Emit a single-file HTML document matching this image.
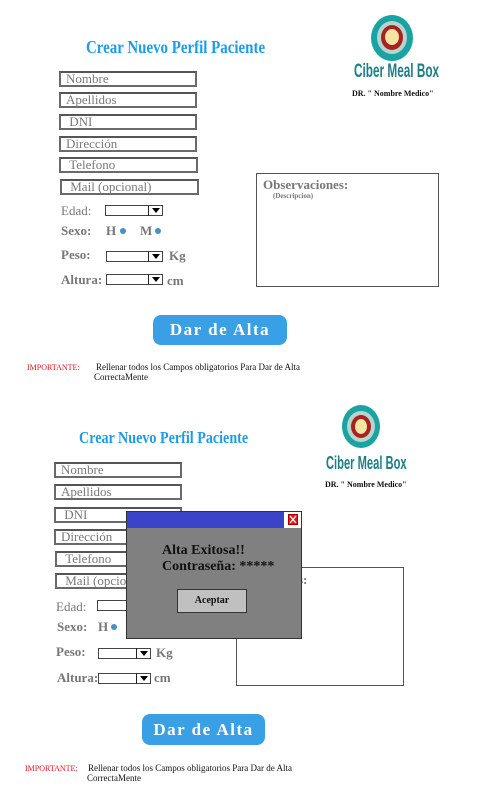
<!DOCTYPE html>
<html><head><meta charset="utf-8"><style>
*{margin:0;padding:0;box-sizing:border-box}
body{width:483px;height:801px;background:#fff;position:relative;overflow:hidden;font-family:"Liberation Serif",serif}
.a{position:absolute;white-space:nowrap}
.t{color:#1e9be8;font-weight:bold;transform:scaleX(.83);transform-origin:left top}
.in{position:absolute;border:2px solid #6a6a6a;border-top-color:#555;color:#7a7a7a;font-size:13px;line-height:12px;padding-left:5px}
.lb{color:#777;font-weight:bold;font-size:13px}
.sel{position:absolute;border:1px solid #444;height:11px;background:#fff}
.sel i{position:absolute;right:0;top:-1px;width:14px;height:11px;border-left:1px solid #222}
.sel i:after{content:"";position:absolute;left:3px;top:3px;border-left:4px solid transparent;border-right:4px solid transparent;border-top:5px solid #000}
.dot{position:absolute;width:6px;height:6px;border-radius:50%;background:#4a8fc0}
.box{position:absolute;border:1px solid #555;background:#fff}
.btn{position:absolute;background:#3aa0e6;border-radius:8px;color:#fff;font-weight:bold;text-align:center;letter-spacing:1.5px}
.imp{color:#e8141c;font-size:8px}
.rl{font-size:9px;color:#111}
.ring{position:absolute;border-radius:50%}
.cmb{color:#1d7f86;font-family:"Liberation Sans Narrow","Liberation Sans",sans-serif;font-weight:bold;transform:scaleX(.62);transform-origin:left top}
.dr{font-size:8px;font-weight:bold;color:#111}
</style></head><body>

<!-- TOP -->
<div class="a t" style="left:86px;top:37px;font-size:18px">Crear Nuevo Perfil Paciente</div>
<div class="ring" style="left:371px;top:15px;width:42px;height:46px;background:#1aa3a3"></div>
<div class="ring" style="left:377px;top:21px;width:30px;height:33px;background:#b7d4cf"></div>
<div class="ring" style="left:381px;top:25px;width:22px;height:25px;background:#a8221f"></div>
<div class="ring" style="left:385px;top:29px;width:14px;height:16px;background:#f4e6a0"></div>
<div class="a cmb" style="left:354px;top:61px;font-size:19px">Ciber Meal Box</div>
<div class="a dr" style="left:352px;top:89px">DR. " Nombre Medico"</div>

<div class="in" style="left:59px;top:71px;width:138px;height:16px">Nombre</div>
<div class="in" style="left:59px;top:92px;width:138px;height:16px">Apellidos</div>
<div class="in" style="left:59px;top:114px;width:138px;height:16px">&nbsp;DNI</div>
<div class="in" style="left:59px;top:136px;width:138px;height:16px">Dirección</div>
<div class="in" style="left:59px;top:157px;width:139px;height:16px">&nbsp;Telefono</div>
<div class="in" style="left:60px;top:179px;width:139px;height:16px">&nbsp;Mail (opcional)</div>

<div class="a lb" style="left:61px;top:203px;font-weight:normal;font-size:13px">Edad:</div>
<div class="sel" style="left:105px;top:205px;width:58px"><i></i></div>
<div class="a lb" style="left:61px;top:223px">Sexo:</div>
<div class="a lb" style="left:106px;top:223px">H</div><div class="dot" style="left:120px;top:228px"></div>
<div class="a lb" style="left:140px;top:223px">M</div><div class="dot" style="left:155px;top:228px"></div>
<div class="a lb" style="left:61px;top:247px">Peso:</div>
<div class="sel" style="left:106px;top:251px;width:57px"><i></i></div>
<div class="a lb" style="left:169px;top:248px">Kg</div>
<div class="a lb" style="left:61px;top:272px">Altura:</div>
<div class="sel" style="left:106px;top:274px;width:57px"><i></i></div>
<div class="a lb" style="left:167px;top:273px">cm</div>

<div class="box" style="left:256px;top:173px;width:183px;height:114px"></div>
<div class="a lb" style="left:263px;top:177px;font-size:13px">Observaciones:</div>
<div class="a" style="left:273px;top:192px;font-size:7px;font-weight:bold;color:#777">(Descripcion)</div>

<div class="btn" style="left:153px;top:315px;width:134px;height:30px;font-size:17px;line-height:30px">Dar de Alta</div>
<div class="a imp" style="left:27px;top:363px">IMPORTANTE:</div>
<div class="a rl" style="left:96px;top:362px">Rellenar todos los Campos obligatorios Para Dar de Alta</div>
<div class="a rl" style="left:94px;top:372px">CorrectaMente</div>

<!-- BOTTOM -->
<div class="a t" style="left:79px;top:428px;font-size:17px">Crear Nuevo Perfil Paciente</div>
<div class="ring" style="left:342px;top:405px;width:38px;height:43px;background:#1aa3a3"></div>
<div class="ring" style="left:347px;top:411px;width:28px;height:31px;background:#b7d4cf"></div>
<div class="ring" style="left:351px;top:415px;width:20px;height:23px;background:#a8221f"></div>
<div class="ring" style="left:355px;top:419px;width:12px;height:15px;background:#f4e6a0"></div>
<div class="a cmb" style="left:326px;top:453px;font-size:18px">Ciber Meal Box</div>
<div class="a dr" style="left:325px;top:480px">DR. " Nombre Medico"</div>

<div class="in" style="left:54px;top:462px;width:128px;height:16px">Nombre</div>
<div class="in" style="left:54px;top:484px;width:128px;height:16px">Apellidos</div>
<div class="in" style="left:54px;top:507px;width:128px;height:16px">&nbsp;DNI</div>
<div class="in" style="left:54px;top:529px;width:128px;height:16px">Dirección</div>
<div class="in" style="left:55px;top:551px;width:128px;height:16px">&nbsp;Telefono</div>
<div class="in" style="left:55px;top:573px;width:128px;height:16px">&nbsp;Mail (opcional)</div>

<div class="a lb" style="left:56px;top:599px;font-weight:normal;font-size:13px">Edad:</div>
<div class="sel" style="left:97px;top:600px;width:54px"><i></i></div>
<div class="a lb" style="left:57px;top:619px">Sexo:</div>
<div class="a lb" style="left:98px;top:619px">H</div><div class="dot" style="left:111px;top:624px"></div>
<div class="a lb" style="left:56px;top:644px">Peso:</div>
<div class="sel" style="left:98px;top:648px;width:53px"><i></i></div>
<div class="a lb" style="left:156px;top:645px">Kg</div>
<div class="a lb" style="left:57px;top:670px">Altura:</div>
<div class="sel" style="left:98px;top:673px;width:53px"><i></i></div>
<div class="a lb" style="left:154px;top:670px">cm</div>

<div class="box" style="left:236px;top:567px;width:168px;height:119px"></div>
<div class="a lb" style="left:285px;top:572px">nes:</div>

<!-- dialog -->
<div class="a" style="left:126px;top:511px;width:176px;height:128px;background:#808080;border:1px solid #333"></div>
<div class="a" style="left:127px;top:512px;width:157px;height:16px;background:#3b44c9"></div>
<div class="a" style="left:284px;top:512px;width:17px;height:16px;background:#fff"></div>
<div class="a" style="left:288px;top:514px;width:10px;height:11px;background:#e8141c;border:1px solid #a00"><svg width="8" height="9" style="position:absolute;left:0;top:0"><path d="M1 1L7 8M7 1L1 8" stroke="#fff" stroke-width="1.3"/></svg></div>
<div class="a" style="left:162px;top:543px;font-size:14px;font-weight:bold;color:#111">Alta Exitosa!!</div>
<div class="a" style="left:162px;top:559px;font-size:14px;font-weight:bold;color:#111">Contraseña: *****</div>
<div class="a" style="left:177px;top:589px;width:70px;height:24px;background:#c0c0c0;border:1px solid #333;font-size:10px;font-weight:bold;text-align:center;line-height:22px;color:#111">Aceptar</div>

<div class="btn" style="left:142px;top:714px;width:123px;height:31px;font-size:17px;line-height:31px">Dar de Alta</div>
<div class="a imp" style="left:25px;top:764px">IMPORTANTE:</div>
<div class="a rl" style="left:88px;top:763px">Rellenar todos los Campos obligatorios Para Dar de Alta</div>
<div class="a rl" style="left:87px;top:773px">CorrectaMente</div>
</body></html>
